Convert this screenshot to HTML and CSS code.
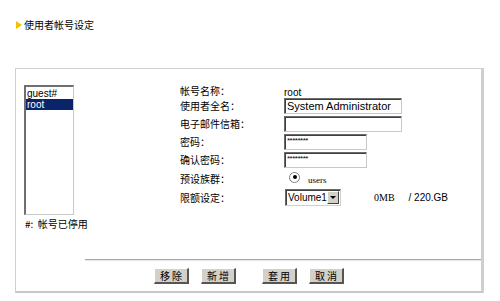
FILE: index.html
```html
<!DOCTYPE html>
<html>
<head>
<meta charset="utf-8">
<link rel="stylesheet" href="styles.css">
</head>
<body>
<div class="header"><span class="tri"></span><span class="title">使用者帐号设定</span></div>
<div class="box">
  <div class="main">
    <div class="leftcol">
      <div class="listbox">
        <div class="item">guest#</div>
        <div class="item sel">root</div>
      </div>
      <div class="note">#:&nbsp; 帐号已停用</div>
    </div>
    <div class="form">
      <div class="lbl">帐号名称：</div><div class="val"><span class="plain">root</span></div>
      <div class="lbl">使用者全名：</div><div class="val"><div class="inp wide">System Administrator</div></div>
      <div class="lbl">电子邮件信箱：</div><div class="val"><div class="inp wide"></div></div>
      <div class="lbl">密码：</div><div class="val"><div class="inp narrow pw">********</div></div>
      <div class="lbl">确认密码：</div><div class="val"><div class="inp narrow pw">********</div></div>
      <div class="lbl">预设族群：</div><div class="val"><span class="radio"><span class="dot"></span></span><span class="grp">users</span></div>
      <div class="lbl">限额设定：</div><div class="val"><div class="select"><span class="stext">Volume1</span><span class="arrow"><span class="caret"></span></span></div><span class="quota">0MB</span><span class="total">/ 220.GB</span></div>
    </div>
  </div>
  <div class="sep"></div>
  <div class="buttons">
    <div class="btn">移 除</div>
    <div class="btn">新 增</div>
    <div class="btn gapl">套 用</div>
    <div class="btn">取 消</div>
  </div>
</div>
</body>
</html>
```
FILE: styles.css
```css
body {
  margin: 0;
  background: #fff;
  font-family: "Liberation Sans", "Noto Sans CJK SC", sans-serif;
  font-size: 11px;
  color: #000;
  width: 500px;
  height: 301px;
  overflow: hidden;
}
.header {
  display: flex;
  align-items: center;
  padding: 19px 0 0 16px;
  height: 12px;
}
.tri {
  width: 0;
  height: 0;
  border-top: 4px solid transparent;
  border-bottom: 4px solid transparent;
  border-left: 6px solid #f2c200;
  margin-right: 2px;
}
.title {
  font-family: "Noto Sans CJK SC", sans-serif;
  font-size: 10px;
  line-height: 12px;
}
.box {
  margin: 37px 0 0 15px;
  width: 465px;
  border-left: 1px solid #d0d0d0;
  border-top: 1px solid #d0d0d0;
  border-right: 3px solid #cfcfcf;
  border-bottom: 2px solid #c8c8c8;
}
.main {
  display: flex;
  height: 190px;
  padding-top: 16px;
  box-sizing: border-box;
}
.leftcol {
  margin-left: 8px;
  width: 152px;
}
.listbox {
  width: 50px;
  height: 130px;
  box-sizing: border-box;
  border-top: 2px solid #6f6f6f;
  border-left: 2px solid #6f6f6f;
  border-right: 1px solid #c8c8c8;
  border-bottom: 1px solid #c8c8c8;
  padding-top: 1px;
}
.item {
  font-size: 10px;
  line-height: 11px;
  padding-left: 1px;
}
.item.sel {
  background: #0a246a;
  color: #fff;
}
.note {
  margin-top: 2px;
  font-family: "Noto Sans CJK SC", sans-serif;
  font-size: 10px;
  line-height: 14px;
  padding-left: 1px;
}
.form {
  margin-left: 4px;
  display: grid;
  grid-template-columns: 104px 182px;
  grid-template-rows: 12px 18px 18px 18px 18px 19px 19px;
  align-items: center;
}
.lbl {
  font-family: "Noto Sans CJK SC", sans-serif;
  font-size: 10px;
  line-height: 12px;
}
.val {
  display: flex;
  align-items: center;
}
.plain {
  font-size: 10px;
  line-height: 12px;
  padding-top: 3px;
}
.inp {
  height: 16px;
  box-sizing: border-box;
  border-top: 1px solid #6a6a6a;
  border-left: 1px solid #6a6a6a;
  border-right: 1px solid #c8c8c8;
  border-bottom: 1px solid #c8c8c8;
  box-shadow: inset 1px 1px 0 #404040;
  font-size: 11px;
  line-height: 14px;
  padding-left: 2px;
  white-space: nowrap;
  overflow: hidden;
}
.inp.wide { width: 118px; }
.inp.narrow { width: 83px; }
.pw {
  font-size: 8px;
  line-height: 12px;
  letter-spacing: -0.5px;
}
.radio {
  width: 9px;
  height: 9px;
  border-radius: 50%;
  border: 1px solid #808080;
  margin-left: 5px;
  display: flex;
  align-items: center;
  justify-content: center;
  margin-top: -3px;
}
.dot {
  width: 4px;
  height: 4px;
  border-radius: 50%;
  background: #000;
}
.grp {
  font-family: "Liberation Serif", serif;
  font-size: 9px;
  margin-left: 8px;
  margin-top: 2px;
}
.select {
  width: 56px;
  height: 17px;
  margin-left: 1px;
  box-sizing: border-box;
  border-top: 1px solid #6a6a6a;
  border-left: 1px solid #6a6a6a;
  border-right: 1px solid #d0d0d0;
  border-bottom: 1px solid #d0d0d0;
  box-shadow: inset 1px 1px 0 #404040;
  display: flex;
  align-items: center;
}
.stext {
  font-size: 10px;
  padding-left: 2px;
  flex: 1;
}
.arrow {
  width: 12px;
  height: 13px;
  background: #d4d0c8;
  border-top: 1px solid #fff;
  border-left: 1px solid #fff;
  border-right: 1px solid #404040;
  border-bottom: 1px solid #404040;
  box-sizing: border-box;
  display: flex;
  align-items: center;
  justify-content: center;
  margin-right: 1px;
}
.caret {
  width: 0;
  height: 0;
  border-left: 3px solid transparent;
  border-right: 3px solid transparent;
  border-top: 3px solid #000;
}
.quota {
  font-family: "Liberation Serif", serif;
  font-size: 10px;
  margin-left: 33px;
}
.total {
  font-size: 10px;
  margin-left: 14px;
}
.sep {
  margin-left: 69px;
  height: 0;
  border-top: 1px solid #a8a8a8;
  border-bottom: 1px solid #e8e8e8;
}
.buttons {
  display: flex;
  padding: 7px 0 7px 138px;
}
.btn {
  width: 35px;
  height: 16px;
  box-sizing: border-box;
  background: #d4d0c8;
  border-top: 1px solid #fff;
  border-left: 1px solid #fff;
  border-right: 2px solid #555;
  border-bottom: 2px solid #555;
  font-family: "Noto Sans CJK SC", sans-serif;
  font-size: 10px;
  line-height: 13px;
  text-align: center;
  margin-right: 12px;
}
.btn.gapl {
  margin-left: 14px;
}
```
